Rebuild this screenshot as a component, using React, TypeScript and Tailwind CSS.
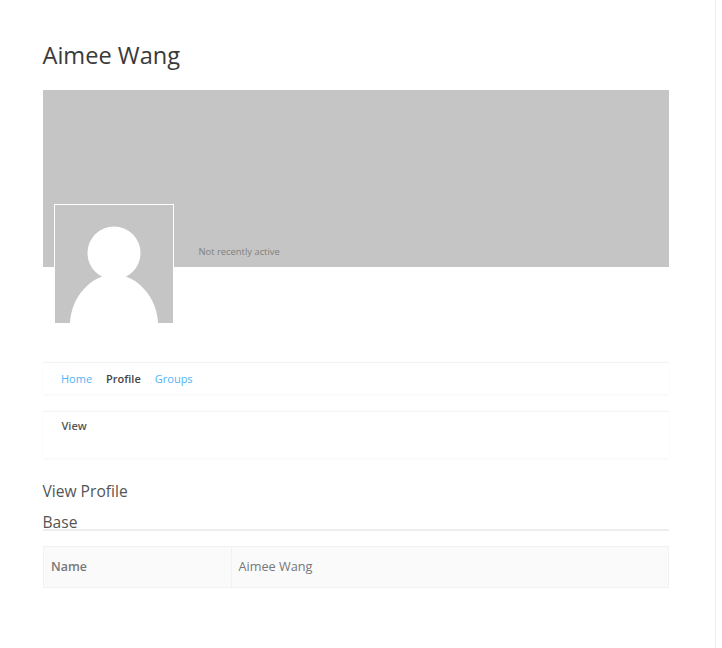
export default function App() {
  return (
    <div className="flex h-[648px] w-[722px] overflow-hidden bg-white font-['Open_Sans',sans-serif] text-[#333]">
      <div className="h-full w-[716px] border-r border-[#eeeeee] pl-[42.5px] pr-[46px]">
        <h1 className="pt-[37px] text-[23.6px] leading-[36px] text-[#3a3a3a]">Aimee Wang</h1>

        <div className="mt-[17px] h-[177px] bg-[#c5c5c5]"></div>
        <div className="relative z-10 mt-[-63px] flex items-start pl-[11.5px]">
          <div className="h-[120px] w-[120px] shrink-0 border border-white bg-[#c5c5c5]">
            <svg viewBox="0 0 118 118" className="block h-[118px] w-[118px]">
              <circle cx="59" cy="48" r="26.5" fill="#ffffff" />
              <path d="M15 118 C16 92 36 70 59 69 C82 70 102 92 103 118 Z" fill="#ffffff" />
            </svg>
          </div>
          <span className="ml-[24.5px] mt-[41px] text-[9.4px] leading-[14px] text-[#808080]">Not recently active</span>
        </div>

        <nav className="mt-[38px] flex h-[32px] items-center gap-[14px] border-t border-[#f4f4f4] pl-[18.5px] pt-[2px] text-[11px] shadow-[0_1px_3px_rgba(0,0,0,0.04)]">
          <a className="text-[#52b3f7]">Home</a>
          <a className="font-semibold text-[#444]">Profile</a>
          <a className="text-[#52b3f7]">Groups</a>
        </nav>

        <div className="mt-[17px] h-[47px] border-t border-[#f4f4f4] pl-[19px] pt-[6px] text-[11px] font-semibold leading-[16px] text-[#555] shadow-[0_1px_3px_rgba(0,0,0,0.04)]">
          View
        </div>

        <h2 className="mt-[22px] text-[15.6px] leading-[22px] text-[#555]">View Profile</h2>
        <h3 className="mt-[10px] h-[19px] border-b-2 border-[#eeeeee] text-[15.6px] leading-[20px] text-[#555]">
          Base
        </h3>

        <div className="mt-[15px] flex h-[42px] border border-[#f2f2f2] bg-[#fafafa] text-[12.7px] text-[#777]">
          <div className="flex w-[188px] items-center border-r border-[#f2f2f2] pl-[7.5px] text-[12.4px] font-semibold">Name</div>
          <div className="flex items-center pl-[7px]">Aimee Wang</div>
        </div>
      </div>
    </div>
  );
}
